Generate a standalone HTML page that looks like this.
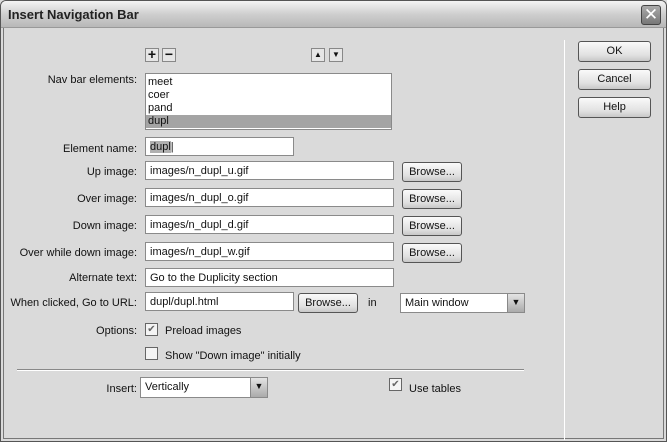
<!DOCTYPE html>
<html><head><style>
*{box-sizing:border-box;margin:0;padding:0}
body{width:667px;height:442px;overflow:hidden;background:#dcdcdc;font-family:"Liberation Sans",sans-serif;font-size:11px;color:#111;position:relative}
.a{position:absolute}
.win{left:0;top:0;width:667px;height:442px;border:1px solid #555;border-radius:6px 6px 0 0;background:#dadada}
.title{left:1px;top:1px;width:665px;height:27px;background:linear-gradient(#f4f4f4,#cfcfcf 50%,#b8b8b8);border-radius:5px 5px 0 0;border-bottom:1px solid #999}
.title span{position:absolute;left:7px;top:6px;font-size:13px;font-weight:bold;color:#222}
.frame{left:3px;top:28px;width:661px;height:411px;border:1px solid #777;border-top:none;background:#dadada}
.lab{text-align:right;width:137px;left:0}
.in{background:#fff;border:1px solid #8a8a8a;padding:3px 0 0 4px;height:19px;white-space:nowrap}
.btn{border:1px solid #555;border-radius:3px;background:linear-gradient(#fafafa,#e0e0e0 70%,#c8c8c8);text-align:center;line-height:18px}
.sb{border:1px solid #888;background:#e6e6e6}
.cb{width:13px;height:13px;border:1px solid #666;background:#f4f4f4;font-size:10px;line-height:11px;text-align:center;color:#666}
.dd{position:absolute;right:0;top:0;width:17px;height:100%;background:linear-gradient(#e4e4e4,#aaa);border-left:1px solid #888;text-align:center;font-size:9px;line-height:17px}
</style></head><body>
<div class="a win"></div>
<div class="a title"><span>Insert Navigation Bar</span></div>
<div class="a" style="left:641px;top:5px;width:20px;height:20px;border:1px solid #444;border-radius:3px;background:linear-gradient(#aaa,#777);color:#fff;font-size:17px;line-height:18px;text-align:center">✕</div>
<div class="a frame"></div>
<div class="a" style="left:564px;top:40px;width:1px;height:400px;background:#888;border-right:1px solid #fff"></div>
<div class="a btn" style="left:578px;top:41px;width:73px;height:21px">OK</div>
<div class="a btn" style="left:578px;top:69px;width:73px;height:21px">Cancel</div>
<div class="a btn" style="left:578px;top:97px;width:73px;height:21px">Help</div>

<div class="a sb" style="left:145px;top:48px;width:14px;height:14px;font-weight:bold;font-size:14px;line-height:11px;text-align:center">+</div>
<div class="a sb" style="left:162px;top:48px;width:14px;height:14px;font-weight:bold;font-size:14px;line-height:11px;text-align:center">−</div>
<div class="a sb" style="left:311px;top:48px;width:14px;height:14px;font-size:8px;line-height:12px;text-align:center">▲</div>
<div class="a sb" style="left:329px;top:48px;width:14px;height:14px;font-size:8px;line-height:12px;text-align:center">▼</div>

<div class="a lab" style="top:74px">Nav bar elements:</div>
<div class="a" style="left:145px;top:73px;width:247px;height:57px;background:#fff;border:1px solid #8a8a8a;line-height:13px;padding-top:2px">
<div style="padding-left:2px">meet</div><div style="padding-left:2px">coer</div><div style="padding-left:2px">pand</div><div style="padding-left:2px;background:#a4a4a4">dupl</div></div>

<div class="a lab" style="top:143px">Element name:</div>
<div class="a in" style="left:145px;top:137px;width:149px"><span style="background:#b0b0b0">dupl</span>|</div>
<div class="a lab" style="top:166px">Up image:</div>
<div class="a in" style="left:145px;top:161px;width:249px">images/n_dupl_u.gif</div>
<div class="a btn" style="left:402px;top:162px;width:60px;height:20px">Browse...</div>
<div class="a lab" style="top:193px">Over image:</div>
<div class="a in" style="left:145px;top:188px;width:249px">images/n_dupl_o.gif</div>
<div class="a btn" style="left:402px;top:189px;width:60px;height:20px">Browse...</div>
<div class="a lab" style="top:220px">Down image:</div>
<div class="a in" style="left:145px;top:215px;width:249px">images/n_dupl_d.gif</div>
<div class="a btn" style="left:402px;top:216px;width:60px;height:20px">Browse...</div>
<div class="a lab" style="top:247px">Over while down image:</div>
<div class="a in" style="left:145px;top:242px;width:249px">images/n_dupl_w.gif</div>
<div class="a btn" style="left:402px;top:243px;width:60px;height:20px">Browse...</div>
<div class="a lab" style="top:272px">Alternate text:</div>
<div class="a in" style="left:145px;top:268px;width:249px">Go to the Duplicity section</div>
<div class="a lab" style="top:297px">When clicked, Go to URL:</div>
<div class="a in" style="left:145px;top:292px;width:149px">dupl/dupl.html</div>
<div class="a btn" style="left:298px;top:293px;width:60px;height:20px">Browse...</div>
<div class="a" style="left:368px;top:297px">in</div>
<div class="a in" style="left:400px;top:293px;width:125px;height:20px">Main window<div class="dd">▼</div></div>

<div class="a lab" style="top:325px">Options:</div>
<div class="a cb" style="left:145px;top:323px">✔</div>
<div class="a" style="left:165px;top:325px">Preload images</div>
<div class="a cb" style="left:145px;top:347px"></div>
<div class="a" style="left:165px;top:350px">Show "Down image" initially</div>
<div class="a" style="left:17px;top:369px;width:507px;height:2px;border-top:1px solid #888;border-bottom:1px solid #fff"></div>
<div class="a lab" style="top:383px">Insert:</div>
<div class="a in" style="left:140px;top:377px;width:128px;height:21px">Vertically<div class="dd">▼</div></div>
<div class="a cb" style="left:389px;top:378px">✔</div>
<div class="a" style="left:409px;top:383px">Use tables</div>
</body></html>
